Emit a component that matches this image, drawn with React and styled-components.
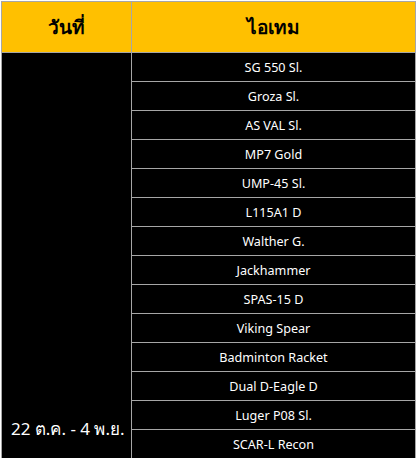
import React from "react";
import styled, { createGlobalStyle } from "styled-components";

const Global = createGlobalStyle`
  html, body { margin: 0; padding: 0; background: #ffffff; }
  body { font-family: "Noto Sans", "Open Sans", sans-serif; }
`;

const Wrap = styled.div`
  padding: 1px 0 0 1px;
`;

const Table = styled.table`
  border-collapse: collapse;
  table-layout: fixed;
  width: 415px;
  border: 1px solid #a6a6a6;
`;

const HeadCell = styled.th`
  background: #ffc000;
  color: #000;
  height: 50px;
  padding: 0;
  border: 1px solid #a6a6a6;
  font-size: 19px;
  font-weight: 700;
  text-align: center;
  vertical-align: middle;
`;

const DateCell = styled.td`
  background: #000;
  color: #fff;
  border: 1px solid #a6a6a6;
  vertical-align: bottom;
  text-align: left;
  padding: 0 0 16px 9px;
  font-size: 17px;
  white-space: nowrap;
`;

const ItemCell = styled.td`
  background: #000;
  color: #fff;
  border: 1px solid #a6a6a6;
  height: 28px;
  padding: 0;
  font-size: 12.6px;
  text-align: center;
  vertical-align: middle;
`;

const items = [
  "SG 550 Sl.",
  "Groza Sl.",
  "AS VAL Sl.",
  "MP7 Gold",
  "UMP-45 Sl.",
  "L115A1 D",
  "Walther G.",
  "Jackhammer",
  "SPAS-15 D",
  "Viking Spear",
  "Badminton Racket",
  "Dual D-Eagle D",
  "Luger P08 Sl.",
  "SCAR-L Recon",
];

export default function App() {
  return (
    <Wrap>
      <Global />
      <Table>
        <colgroup>
          <col style={{ width: "130px" }} />
          <col />
        </colgroup>
        <thead>
          <tr>
            <HeadCell>วันที่</HeadCell>
            <HeadCell>ไอเทม</HeadCell>
          </tr>
        </thead>
        <tbody>
          {items.map((it, i) => (
            <tr key={it}>
              {i === 0 && (
                <DateCell rowSpan={items.length}>22 ต.ค. - 4 พ.ย.</DateCell>
              )}
              <ItemCell>{it}</ItemCell>
            </tr>
          ))}
        </tbody>
      </Table>
    </Wrap>
  );
}
